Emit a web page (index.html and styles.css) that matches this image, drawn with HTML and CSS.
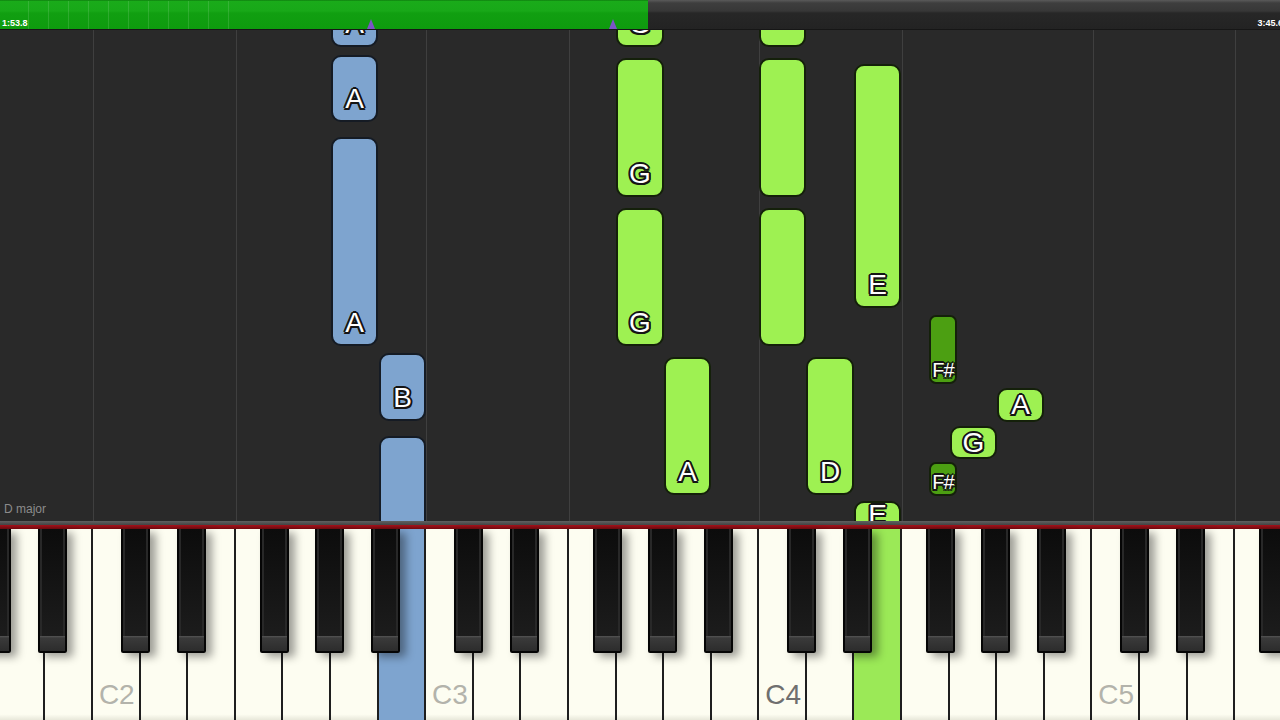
FILE: index.html
```html
<!DOCTYPE html>
<html>
<head>
<meta charset="utf-8">
<link rel="stylesheet" href="styles.css">
</head>
<body>
<div class="app">
  <div class="topbar">
    <div class="progress">
      <div class="ticks"></div>
      <span class="time">1:53.8</span>
    </div>
    <div class="remaining">
      <span class="time time-end">3:45.6</span>
    </div>
    <span class="marker m1"></span>
    <span class="marker m2"></span>
  </div>

  <div class="roll">
    <div class="grid">
      <div class="col col-lead"></div>
      <div class="col col-cde"></div>
      <div class="col col-fgab"></div>
      <div class="col col-cde"></div>
      <div class="col col-fgab"></div>
      <div class="col col-cde"></div>
      <div class="col col-fgab"></div>
      <div class="col col-cde"></div>
      <div class="col col-fgab"></div>
    </div>

    <!-- left hand -->
    <div class="note lh" style="left:331px;top:-90px;width:47px;height:107px"><span class="lbl">A</span></div>
    <div class="note lh" style="left:331px;top:25px;width:47px;height:67px"><span class="lbl">A</span></div>
    <div class="note lh" style="left:331px;top:107px;width:47px;height:209px"><span class="lbl">A</span></div>
    <div class="note lh" style="left:379px;top:323px;width:47px;height:68px"><span class="lbl">B</span></div>
    <div class="note lh" style="left:379px;top:406px;width:47px;height:164px"></div>

    <!-- right hand -->
    <div class="note rh" style="left:616px;top:-90px;width:48px;height:107px"><span class="lbl">G</span></div>
    <div class="note rh" style="left:616px;top:28px;width:48px;height:139px"><span class="lbl">G</span></div>
    <div class="note rh" style="left:616px;top:178px;width:48px;height:138px"><span class="lbl">G</span></div>
    <div class="note rh" style="left:664px;top:327px;width:47px;height:138px"><span class="lbl">A</span></div>

    <div class="note rh" style="left:759px;top:-90px;width:47px;height:107px"></div>
    <div class="note rh" style="left:759px;top:28px;width:47px;height:139px"></div>
    <div class="note rh" style="left:759px;top:178px;width:47px;height:138px"></div>
    <div class="note rh" style="left:806px;top:327px;width:48px;height:138px"><span class="lbl">D</span></div>

    <div class="note rh" style="left:854px;top:34px;width:47px;height:244px"><span class="lbl">E</span></div>
    <div class="note rh" style="left:854px;top:471px;width:47px;height:37px"><span class="lbl">E</span></div>

    <div class="note rh sharp" style="left:929px;top:285px;width:28px;height:69px"><span class="lbl">F#</span></div>
    <div class="note rh sharp" style="left:929px;top:432px;width:28px;height:34px"><span class="lbl">F#</span></div>

    <div class="note rh short" style="left:950px;top:396px;width:47px;height:33px"><span class="lbl">G</span></div>
    <div class="note rh short" style="left:997px;top:358px;width:47px;height:34px"><span class="lbl">A</span></div>

    <span class="key-sig">D major</span>
  </div>

  <div class="kb-rim"></div>
  <div class="kb-red"></div>
  <div class="keys">
    <div class="wk"><span class="bk bk-g"></span></div>
    <div class="wk"><span class="bk bk-a"></span></div>
    <div class="wk"></div>
    <div class="wk"><span class="bk bk-c"></span><span class="klabel">C2</span></div>
    <div class="wk"><span class="bk bk-d"></span></div>
    <div class="wk"></div>
    <div class="wk"><span class="bk bk-f"></span></div>
    <div class="wk"><span class="bk bk-g"></span></div>
    <div class="wk"><span class="bk bk-a"></span></div>
    <div class="wk hl-blue"></div>
    <div class="wk"><span class="bk bk-c"></span><span class="klabel">C3</span></div>
    <div class="wk"><span class="bk bk-d"></span></div>
    <div class="wk"></div>
    <div class="wk"><span class="bk bk-f"></span></div>
    <div class="wk"><span class="bk bk-g"></span></div>
    <div class="wk"><span class="bk bk-a"></span></div>
    <div class="wk"></div>
    <div class="wk"><span class="bk bk-c"></span><span class="klabel dark">C4</span></div>
    <div class="wk"><span class="bk bk-d"></span></div>
    <div class="wk hl-green"></div>
    <div class="wk"><span class="bk bk-f"></span></div>
    <div class="wk"><span class="bk bk-g"></span></div>
    <div class="wk"><span class="bk bk-a"></span></div>
    <div class="wk"></div>
    <div class="wk"><span class="bk bk-c"></span><span class="klabel">C5</span></div>
    <div class="wk"><span class="bk bk-d"></span></div>
    <div class="wk"></div>
    <div class="wk"><span class="bk bk-f"></span></div>
    <div class="wk"><span class="bk bk-g"></span></div>
  </div>
</div>
</body>
</html>
```

FILE: styles.css
```css
* { box-sizing: border-box; margin: 0; padding: 0; }
html, body {
  width: 1280px; height: 720px; overflow: hidden;
  background: #292929;
  font-family: "Liberation Sans", Arial, sans-serif;
}
.app { display: flex; flex-direction: column; width: 1280px; height: 720px; overflow: hidden; }

/* top progress bar */
.topbar { position: relative; display: flex; height: 30px; flex: none; border-bottom: 1px solid #161616; }
.progress {
  position: relative; width: 648px; flex: none;
  background: linear-gradient(#0b6f0b 0, #1aab1a 1px, #18a818 11px, #119f11 13px, #0e9b0e 100%);
  display: flex; align-items: flex-end; padding: 0 0 1px 2px;
}
.ticks {
  position: absolute; left: 9px; top: 1px; bottom: 0; width: 221px;
  background: repeating-linear-gradient(90deg, transparent 0 19px, rgba(255,255,255,.12) 19px 20px);
}
.remaining {
  flex: 1;
  background: linear-gradient(#5a5a5a 0, #3e3e3e 3px, #373737 11px, #272727 13px, #232323 100%);
  display: flex; align-items: flex-end; justify-content: flex-end; padding-bottom: 1px;
}
.time { position: relative; color: #fff; font-size: 9px; font-weight: 700; line-height: 10px; }
.time-end { margin-right: -3px; }
.marker {
  position: absolute; bottom: 0; width: 0; height: 0;
  border-left: 4px solid transparent; border-right: 4px solid transparent;
  border-bottom: 10px solid #7b54c6;
}
.m1 { left: 367px; }
.m2 { left: 609px; }

/* piano roll */
.roll { position: relative; flex: 1; overflow: hidden; background: #292929; }
.grid { display: flex; height: 100%; margin-left: -2.2px; }
.col { flex: none; height: 100%; border-left: 1px solid #3f3f3f; }
.col-lead { width: 95.2px; border-left: none; }
.col-cde { width: 142.8px; }
.col-fgab { width: 190.4px; }

.note {
  position: absolute;
  border: 2px solid #141a10; border-radius: 10px;
  display: flex; flex-direction: column; justify-content: flex-end; align-items: center;
  padding-bottom: 7px;
}
.lh { background: #7ea4cf; border-color: #151b24; }
.rh { background: #9ef152; border-color: #14200a; }
.sharp { background: #4c9f12; border-radius: 7px; padding-bottom: 2px; }
.short { justify-content: center; padding-bottom: 0; }
.lbl {
  color: #fff; font-size: 28px; line-height: 28px;
  text-shadow: -2px 0 #151515, 2px 0 #151515, 0 -2px #151515, 0 2px #151515,
    -1.5px -1.5px #151515, 1.5px -1.5px #151515, -1.5px 1.5px #151515, 1.5px 1.5px #151515;
}
.sharp .lbl { font-size: 20px; line-height: 20px; letter-spacing: -1px; }
.key-sig { position: absolute; left: 4px; bottom: 5px; color: #8c8c8c; font-size: 12px; line-height: 14px; }

/* keyboard */
.kb-rim { height: 4px; flex: none; background: linear-gradient(#606060, #444); }
.kb-red { height: 4px; flex: none; background: linear-gradient(#a5121b, #700a0f); }
.keys { display: flex; height: 191px; flex: none; margin-left: -49.8px; background: #1a1a1a; }
.wk {
  position: relative; flex: none; width: 47.6px; height: 100%;
  background: linear-gradient(#fdfdf1 0, #fdfdf1 97%, #e8e8da 100%);
  border-right: 2px solid #1e1e1e;
  display: flex; flex-direction: column; justify-content: flex-end; align-items: center;
  padding-bottom: 11px;
}
.wk.hl-blue { background: #7ea4cf; }
.wk.hl-green { background: #9be957; }
.klabel { font-size: 28px; line-height: 28px; color: #b3b3ab; margin-right: -2px; }
.klabel.dark { color: #6f6f6f; }

.bk {
  position: absolute; top: 0; z-index: 2;
  width: 29px; height: 124px;
  background:
    linear-gradient(90deg, #050505 0 2px, #282828 2px 4px, transparent 4px calc(100% - 4px), #282828 calc(100% - 4px) calc(100% - 2px), #050505 calc(100% - 2px)),
    linear-gradient(#0c0c0c, #1c1c1c 88%);
  border-bottom: 2px solid #050505;
  border-radius: 0 0 2px 2px;
  box-shadow: 6px 4px 8px rgba(0,0,0,.38);
}
.bk::after {
  content: ""; position: absolute; left: 2px; right: 2px; bottom: 0; height: 15px;
  background: linear-gradient(#555 0, #3a3a3a 2px, #2c2c2c 100%);
}
.bk-c { left: 28px; }
.bk-d { left: 36px; }
.bk-f { left: 24px; }
.bk-g { left: 31.4px; }
.bk-a { left: 39.8px; }
```
